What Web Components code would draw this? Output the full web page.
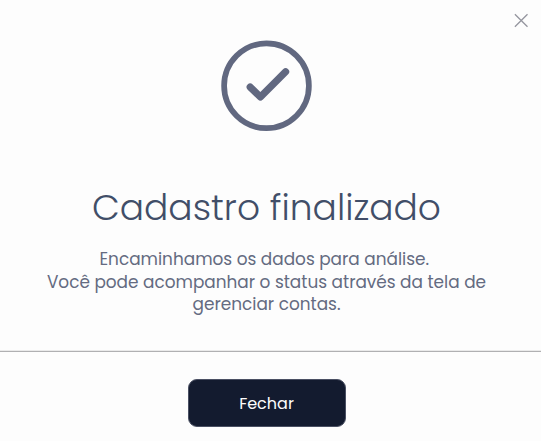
<!DOCTYPE html>
<html lang="pt-BR">
<head>
<meta charset="UTF-8">
<title>Cadastro finalizado</title>
<style>
  body {
    margin: 0;
    background: #fdfdfd;
    font-family: Poppins, Inter, "Open Sans", sans-serif;
  }
</style>
</head>
<body>
<status-modal>
  <check-icon slot="icon"></check-icon>
  <span slot="title">Cadastro finalizado</span>
  <text-line slot="message">Encaminhamos os dados para análise.&nbsp;</text-line>
  <text-line slot="message">Você pode acompanhar o status através da tela de</text-line>
  <text-line slot="message">gerenciar contas.</text-line>
  <modal-button slot="action">Fechar</modal-button>
</status-modal>

<script>
class CheckIcon extends HTMLElement {
  constructor() {
    super();
    this.attachShadow({ mode: "open" });
  }
  connectedCallback() {
    this.shadowRoot.innerHTML = `
      <style>
        :host { display: block; width: 93px; height: 92px; }
        svg { display: block; }
      </style>
      <svg width="93" height="92" viewBox="0 0 93 92" fill="none" stroke="#616880">
        <circle cx="46.5" cy="45.8" r="42.4" stroke-width="5.7"/>
        <path d="M30.2 47.1 L40.4 57 L65.6 31.8" stroke-width="7.2" stroke-linecap="round" stroke-linejoin="round"/>
      </svg>
    `;
  }
}

class TextLine extends HTMLElement {
  constructor() {
    super();
    this.attachShadow({ mode: "open" });
  }
  connectedCallback() {
    this.shadowRoot.innerHTML = `
      <style>
        :host { display: block; white-space: nowrap; }
      </style>
      <slot></slot>
    `;
  }
}

class ModalButton extends HTMLElement {
  constructor() {
    super();
    this.attachShadow({ mode: "open" });
  }
  connectedCallback() {
    this.shadowRoot.innerHTML = `
      <style>
        :host { display: block; }
        button {
          display: block;
          width: 158px;
          height: 48px;
          padding: 0;
          border: 1px solid #4a5063;
          border-radius: 9px;
          background: #131b2f;
          color: #fdfdfd;
          font: inherit;
          font-size: 16px;
          cursor: pointer;
        }
      </style>
      <button type="button"><slot></slot></button>
    `;
  }
}

class StatusModal extends HTMLElement {
  constructor() {
    super();
    this.attachShadow({ mode: "open" });
  }
  getTemplate() {
    const template = document.createElement("template");
    template.innerHTML = `
      ${this.getStyles()}
      <section>
        <div class="content">
          <slot name="icon"></slot>
          <h1><slot name="title"></slot></h1>
          <div class="message"><slot name="message"></slot></div>
        </div>
        <footer><slot name="action"></slot></footer>
        <button class="close" type="button" aria-label="Fechar">
          <svg width="14" height="15" viewBox="0 0 14 15" stroke="#95969f" stroke-width="1.3">
            <path d="M0.9 1.2 L13.5 13.8 M13.5 1.2 L0.9 13.8"/>
          </svg>
        </button>
      </section>
    `;
    return template;
  }
  getStyles() {
    return `
    <style>
      * {
        box-sizing: border-box;
      }
      :host {
        display: block;
      }
      section {
        position: relative;
        display: flex;
        flex-direction: column;
        height: 441px;
        overflow: hidden;
      }
      .content {
        display: flex;
        flex-direction: column;
        align-items: center;
        height: 350px;
        padding: 40px 8px 0 0;
      }
      h1 {
        margin: 49px 0 0;
        color: #414e68;
        font-size: 36px;
        font-weight: 300;
        line-height: 54px;
        white-space: nowrap;
      }
      .message {
        margin-top: 13.4px;
        color: #646b81;
        font-size: 16.9px;
        line-height: 22.5px;
        text-align: center;
      }
      footer {
        display: flex;
        justify-content: center;
        padding: 27px 8px 0 0;
        border-top: 1px solid #b0b0b2;
        box-shadow: 0 -1px #eaeaea;
        margin-top: 1px;
      }
      .close {
        position: absolute;
        top: 13px;
        right: 13px;
        padding: 0;
        border: 0;
        background: none;
        cursor: pointer;
      }
      .close svg {
        display: block;
      }
    </style>
    `;
  }
  connectedCallback() {
    this.shadowRoot.appendChild(this.getTemplate().content.cloneNode(true));
  }
}

customElements.define("check-icon", CheckIcon);
customElements.define("text-line", TextLine);
customElements.define("modal-button", ModalButton);
customElements.define("status-modal", StatusModal);
</script>
</body>
</html>
